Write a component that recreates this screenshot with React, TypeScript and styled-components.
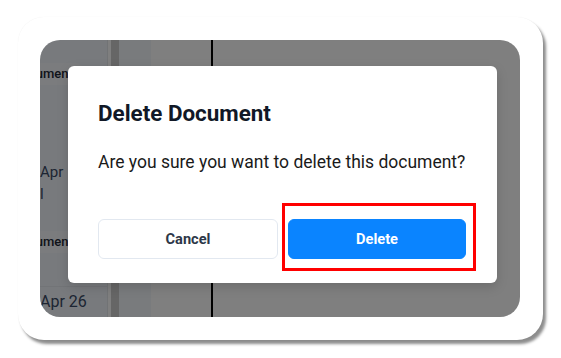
import React from "react";
import styled, { createGlobalStyle } from "styled-components";

const Global = createGlobalStyle`
  html, body { margin: 0; padding: 0; background: #ffffff; }
  body { font-family: Roboto, "Liberation Sans", sans-serif; }
`;

const Page = styled.div`
  width: 561px;
  height: 358px;
  background: #ffffff;
  padding: 17px 0 0 18px;
  box-sizing: border-box;
`;

const Frame = styled.div`
  width: 525px;
  height: 323px;
  box-sizing: border-box;
  padding: 23px 23px 23px 22px;
  background: #ffffff;
  border-radius: 26px;
  box-shadow: 3px 4px 3px rgba(0, 0, 0, 0.45), 0 0 1px rgba(0, 0, 0, 0.08);
`;

const Screen = styled.div`
  position: relative;
  width: 480px;
  height: 277px;
  border-radius: 20px;
  overflow: hidden;
  display: flex;
  background: #ffffff;
`;

const SideCol = styled.div`
  width: 67px;
  background: #f1f5fa;
  display: flex;
  flex-direction: column;
  border-right: 1px solid #e2e6ea;
  flex-shrink: 0;
`;

const Header = styled.div<{ $top: number }>`
  margin-top: ${(p) => p.$top}px;
  height: 22px;
  background: #f7f9fc;
  border-top-right-radius: 8px;
  margin-right: 24px;
  font-size: 13px;
  font-weight: 500;
  color: #1f2937;
  line-height: 22px;
  white-space: nowrap;
  text-indent: -27px;
`;

const Cell = styled.div<{ $top: number; $size?: number }>`
  margin-top: ${(p) => p.$top}px;
  font-size: ${(p) => p.$size ?? 15}px;
  line-height: 20px;
  color: #3a4a66;
  white-space: nowrap;
`;

const BottomRow = styled.div`
  margin-top: auto;
  height: 30px;
  border-top: 1px solid #e4e8ee;
  font-size: 16px;
  line-height: 30px;
  color: #3a4a66;
  white-space: nowrap;
`;

const Bar = styled.div<{ $w: number; $bg: string }>`
  width: ${(p) => p.$w}px;
  background: ${(p) => p.$bg};
  flex-shrink: 0;
`;

const Main = styled.div`
  flex: 1;
  position: relative;
`;

const Marks = styled.svg`
  position: absolute;
  left: 450px;
  top: 140px;
`;

const Overlay = styled.div`
  position: absolute;
  inset: 0;
  background: rgba(0, 0, 0, 0.5);
`;

const Dialog = styled.div`
  position: absolute;
  left: 28px;
  top: 26px;
  width: 429px;
  height: 217px;
  box-sizing: border-box;
  background: #ffffff;
  border-radius: 6px;
  padding: 34px 31px 24px 30px;
  display: flex;
  flex-direction: column;
  box-shadow: 0 4px 12px rgba(0, 0, 0, 0.15);
`;

const Title = styled.h2`
  margin: 0;
  font-size: 22.4px;
  line-height: 26px;
  font-weight: 700;
  color: #111827;
`;

const Body = styled.p`
  margin: 25px 0 0;
  font-size: 17.5px;
  line-height: 22px;
  color: #1a1a1a;
  white-space: nowrap;
`;

const Actions = styled.div`
  margin-top: auto;
  display: grid;
  grid-template-columns: 180px 178px;
  gap: 10px;
  position: relative;
`;

const Button = styled.button<{ $primary?: boolean }>`
  height: 40px;
  border-radius: 6px;
  font-family: Roboto, "Liberation Sans", sans-serif;
  font-size: 14.6px;
  font-weight: 700;
  cursor: pointer;
  border: 1px solid ${(p) => (p.$primary ? "#0a84ff" : "#e2e8f0")};
  background: ${(p) => (p.$primary ? "#0a84ff" : "#ffffff")};
  color: ${(p) => (p.$primary ? "#ffffff" : "#2d3748")};
`;

const Highlight = styled.div`
  position: absolute;
  left: 184px;
  top: -16px;
  width: 194px;
  height: 68px;
  box-sizing: border-box;
  border: 3px solid #ff0000;
  pointer-events: none;
`;

export default function App() {
  return (
    <>
      <Global />
      <Page>
        <Frame>
          <Screen>
            <SideCol>
              <Header $top={23}>Document</Header>
              <Cell $top={77}>Apr</Cell>
              <Cell $top={2}>l</Cell>
              <Header $top={27}>Document</Header>
              <BottomRow>Apr 26</BottomRow>
            </SideCol>
            <Bar $w={3} $bg="#ffffff" />
            <Bar $w={8} $bg="#cccccc" />
            <Bar $w={32} $bg="#f2f6fb" />
            <Bar $w={60} $bg="#ffffff" />
            <Bar $w={2} $bg="#000000" />
            <Main>
              <Marks width="40" height="110" viewBox="0 0 40 110">
                <rect x="5" y="5" width="6" height="8" fill="#2f8ff0" />
                <line x1="18" y1="8" x2="26" y2="16" stroke="#2f8ff0" strokeWidth="2" />
                <rect x="5" y="62" width="3" height="10" fill="#2f8ff0" />
                <rect x="5" y="94" width="6" height="8" fill="#2f8ff0" />
                <circle cx="21" cy="100" r="1" fill="#9bd27a" />
              </Marks>
            </Main>
            <Overlay />
            <Dialog>
              <Title>Delete Document</Title>
              <Body>Are you sure you want to delete this document?</Body>
              <Actions>
                <Button>Cancel</Button>
                <Button $primary>Delete</Button>
                <Highlight />
              </Actions>
            </Dialog>
          </Screen>
        </Frame>
      </Page>
    </>
  );
}
